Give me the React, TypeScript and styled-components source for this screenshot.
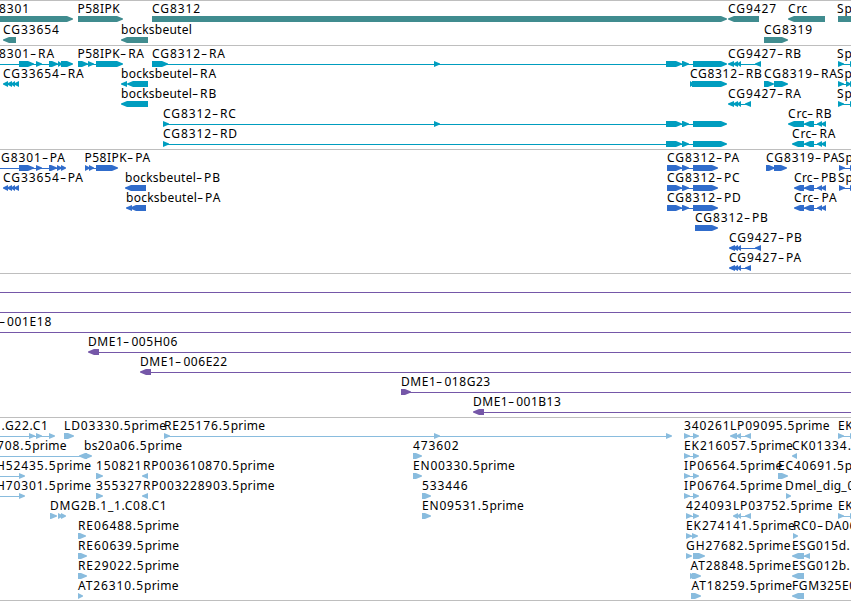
import styled, { createGlobalStyle } from "styled-components";

type Direction = 1 | -1;
type Exon = [number, number, Direction?];

interface Feature {
  label?: string;
  x?: number;
  dir?: Direction;
  exons?: Exon[];
  line?: [number, number];
  spacing?: number;
}

interface TrackData {
  name: string;
  color: string;
  rowHeight: number;
  rows: Feature[][];
}

const VIEW_WIDTH = 851;
const GLYPH_HEIGHT = 6;

const GlobalStyle = createGlobalStyle`
  body {
    margin: 0;
    background-color: #ffffff;
    overflow: hidden;
  }
`;

const Browser = styled.main`
  display: flex;
  flex-direction: column;
  width: ${VIEW_WIDTH}px;
  height: 601px;
  overflow: hidden;
  color: #000000;
  font-family: "Noto Sans", "DejaVu Sans", sans-serif;
  font-size: 12px;
`;

const Track = styled.section<{ $color: string }>`
  display: flex;
  flex-direction: column;
  flex-shrink: 0;
  padding-bottom: 3px;
  border-top: 1px solid #bebebe;
  color: ${(props) => props.$color};

  &:first-child,
  &:last-of-type {
    padding-bottom: 2px;
  }
`;

const Row = styled.div<{ $height: number }>`
  display: flex;
  flex-direction: column;
  position: relative;
  height: ${(props) => props.$height}px;
  padding-top: 15px;
  box-sizing: border-box;
`;

/* Labels are pinned to the map coordinate where their feature starts. */
const Label = styled.span<{ $x: number }>`
  position: absolute;
  top: -1px;
  left: ${(props) => props.$x}px;
  color: #000000;
  line-height: 17px;
  white-space: pre;
`;

const Run = styled.span<{ $spacing: number }>`
  letter-spacing: ${(props) => props.$spacing}px;
`;

const Dash = styled.span`
  display: inline-block;
  width: 8px;
  transform: scaleX(1.6);
  transform-origin: 0 50%;
`;

const Glyphs = styled.svg`
  display: block;
  flex-shrink: 0;
  fill: currentColor;
`;

const EndRule = styled.div`
  flex-shrink: 0;
  height: 1px;
  background-color: #bebebe;
`;

const rc: Exon[] = [
  [434, 440],
  [666, 682],
  [682, 689],
  [693, 727],
];
const pa: Exon[] = [
  [667, 682],
  [682, 689],
  [693, 718],
];
const cg33654: Exon[] = [
  [3, 8],
  [7, 12],
  [11, 15],
  [14, 19],
];
const crcTail: Exon[] = [
  [804, 814],
  [817, 822],
  [821, 826],
];
const ek: Exon[] = [
  [684, 690],
  [693, 699],
];

const tracks: TrackData[] = [
  {
    name: "genes",
    color: "#408c8f",
    rowHeight: 21,
    rows: [
      [
        { label: "8301", x: -1, exons: [[-10, 73]] },
        { label: "P58IPK", x: 77.5, spacing: 0.5, exons: [[78, 123]] },
        { label: "CG8312", x: 152, exons: [[152, 727]] },
        { label: "CG9427", x: 728, dir: -1, exons: [[728, 759]] },
        { label: "Crc", x: 788, dir: -1, exons: [[788, 825]] },
        { label: "Sp", x: 837, exons: [[838, 870]] },
      ],
      [
        { label: "CG33654", x: 3, dir: -1, exons: [[3, 16]] },
        { label: "bocksbeutel", x: 121, dir: -1, exons: [[121, 148]] },
        { label: "CG8319", x: 764, exons: [[764, 788]] },
      ],
    ],
  },
  {
    name: "transcripts",
    color: "#009dbf",
    rowHeight: 20,
    rows: [
      [
        {
          label: "8301-RA",
          x: -1,
          line: [0, 70],
          exons: [[19, 34], [36, 42], [49, 58], [58, 62], [61, 73]],
        },
        { label: "P58IPK-RA", x: 77.5, spacing: 0.5, line: [78, 120], exons: [[78, 88], [88, 94], [96, 123]] },
        { label: "CG8312-RA", x: 152, line: [152, 724], exons: [[152, 168], ...rc] },
        {
          label: "CG9427-RB",
          x: 728,
          dir: -1,
          line: [730, 760],
          exons: [[728, 734], [733, 738], [737, 741], [755, 761]],
        },
        { label: "Sp", x: 837, line: [838, 851], exons: [[838, 844], [850, 856]] },
      ],
      [
        { label: "CG33654-RA", x: 3, dir: -1, exons: cg33654 },
        { label: "bocksbeutel-RA", x: 121, dir: -1, exons: [[121, 127], [127, 148]] },
        { label: "CG8312-RB", x: 690, spacing: 0.7, exons: [[690, 694], [692, 727]] },
        { label: "CG8319-RA", x: 764, exons: [[764, 774], [774, 788]] },
        { label: "Sp", x: 837, line: [838, 851], exons: [[838, 844], [846, 851], [850, 856]] },
      ],
      [
        { label: "bocksbeutel-RB", x: 121, dir: -1, exons: [[121, 148]] },
        {
          label: "CG9427-RA",
          x: 728,
          dir: -1,
          line: [730, 750],
          exons: [[728, 734], [733, 738], [737, 741], [745, 751]],
        },
        { label: "Sp", x: 837, line: [838, 851], exons: [[838, 844], [850, 856]] },
      ],
      [
        { label: "CG8312-RC", x: 163, line: [163, 724], exons: [[163, 169], ...rc] },
        { label: "Crc-RB", x: 788, dir: -1, line: [790, 824], exons: [[788, 804], ...crcTail] },
      ],
      [
        { label: "CG8312-RD", x: 163, line: [163, 724], exons: [[163, 169], ...rc.slice(1)] },
        { label: "Crc-RA", x: 792, dir: -1, line: [794, 824], exons: [[792, 804], ...crcTail] },
      ],
    ],
  },
  {
    name: "proteins",
    color: "#306ccb",
    rowHeight: 20,
    rows: [
      [
        {
          label: "G8301-PA",
          x: 1,
          line: [0, 64],
          exons: [[19, 34], [36, 42], [49, 57], [57, 62], [61, 66]],
        },
        { label: "P58IPK-PA", x: 84.5, spacing: 0.5, line: [85, 115], exons: [[85, 90], [89, 94], [96, 118]] },
        { label: "CG8312-PA", x: 667, line: [667, 715], exons: pa },
        { label: "CG8319-PA", x: 766, exons: [[766, 775], [774, 787]] },
        { label: "Sp", x: 838, line: [839, 851], exons: [[839, 845], [850, 856]] },
      ],
      [
        { label: "CG33654-PA", x: 3, dir: -1, exons: cg33654 },
        { label: "bocksbeutel-PB", x: 125, dir: -1, exons: [[125, 146]] },
        { label: "CG8312-PC", x: 667, line: [667, 715], exons: pa },
        { label: "Crc-PB", x: 794, spacing: 0.3, dir: -1, line: [796, 824], exons: [[794, 804], ...crcTail] },
        { label: "Sp", x: 838, line: [839, 851], exons: [[839, 845], [850, 856]] },
      ],
      [
        { label: "bocksbeutel-PA", x: 126, dir: -1, exons: [[126, 132], [130, 146]] },
        { label: "CG8312-PD", x: 667, line: [667, 715], exons: pa },
        { label: "Crc-PA", x: 794, dir: -1, line: [796, 824], exons: [[794, 804], ...crcTail] },
      ],
      [{ label: "CG8312-PB", x: 695, exons: [[695, 718]] }],
      [
        {
          label: "CG9427-PB",
          x: 729,
          dir: -1,
          line: [731, 760],
          exons: [[729, 735], [733, 738], [737, 741], [755, 761]],
        },
      ],
      [
        {
          label: "CG9427-PA",
          x: 729,
          dir: -1,
          line: [731, 750],
          exons: [[729, 735], [733, 738], [737, 741], [745, 751]],
        },
      ],
    ],
  },
  {
    name: "clones",
    color: "#7557a8",
    rowHeight: 20,
    rows: [
      [{ line: [0, 851] }],
      [{ line: [0, 851] }],
      [{ label: "-001E18", x: -1, spacing: 0.65, line: [0, 851] }],
      [{ label: "DME1-005H06", x: 88, spacing: 0.55, dir: -1, line: [92, 851], exons: [[88, 99]] }],
      [{ label: "DME1-006E22", x: 140, spacing: 0.55, dir: -1, line: [144, 851], exons: [[140, 151]] }],
      [{ label: "DME1-018G23", x: 401, spacing: 0.55, line: [401, 851], exons: [[401, 411]] }],
      [{ label: "DME1-001B13", x: 473, spacing: 0.5, dir: -1, line: [477, 851], exons: [[473, 484]] }],
    ],
  },
  {
    name: "ests",
    color: "#89bcde",
    rowHeight: 20,
    rows: [
      [
        { label: "1.G22.C1", x: -6, spacing: 0.7, line: [0, 52], exons: [[29, 35], [36, 42], [49, 55]] },
        { label: "LD03330.5prime", x: 64, exons: [[64, 74]] },
        { label: "RE25176.5prime", x: 164, line: [164, 670], exons: [[164, 170], [434, 440], [666, 672]] },
        { label: "340261", x: 684, line: [684, 697], exons: ek },
        { label: "LP09095.5prime", x: 730, spacing: 0.8, dir: -1, line: [732, 750], exons: [[730, 737], [736, 741], [745, 751]] },
        { label: "EK", x: 838, spacing: 0.5, line: [838, 851], exons: [[838, 844], [850, 856]] },
      ],
      [
        { label: "708.5prime", x: -3, line: [0, 82], exons: [[79, 87, -1], [85, 92]] },
        { label: "bs20a06.5prime", x: 84 },
        { label: "473602", x: 413, exons: [[413, 422]] },
        { label: "EK216057.5prime", x: 684, line: [684, 697], exons: ek },
        { label: "CK01334.", x: 792, dir: -1, exons: [[792, 797]] },
      ],
      [
        { label: "H52435.5prime", x: -4, line: [0, 20], exons: [[19, 25]] },
        { label: "150821", x: 96, exons: [[96, 103]] },
        { label: "RP003610870.5prime", x: 143, spacing: 0.8, dir: -1, exons: [[142, 148]] },
        { label: "EN00330.5prime", x: 413, spacing: 0.8, exons: [[413, 422]] },
        { label: "IP06564.5prime", x: 684, line: [684, 697], exons: ek },
        { label: "EC40691.5p", x: 778, exons: [[778, 788]] },
      ],
      [
        { label: "H70301.5prime", x: -4, line: [0, 20], exons: [[19, 25]] },
        { label: "355327", x: 96, exons: [[96, 103]] },
        { label: "RP003228903.5prime", x: 143, spacing: 0.8, dir: -1, exons: [[142, 148]] },
        { label: "533446", x: 422, exons: [[422, 431]] },
        { label: "IP06764.5prime", x: 684, line: [684, 697], exons: ek },
        { label: "Dmel_dig_0", x: 785, exons: [[786, 791]] },
      ],
      [
        { label: "DMG2B.1_1.C08.C1", x: 50, spacing: 0.7, exons: [[50, 57], [58, 63], [61, 66]] },
        { label: "EN09531.5prime", x: 422, spacing: 0.8, exons: [[422, 431]] },
        { label: "424093", x: 686, line: [686, 697], exons: [[686, 692], [693, 699]] },
        { label: "LP03752.5prime", x: 733, spacing: 0.8, dir: -1, line: [735, 750], exons: [[733, 738], [737, 741], [745, 751]] },
        { label: "EK", x: 838, spacing: 0.5, line: [838, 851], exons: [[838, 844], [850, 856]] },
      ],
      [
        { label: "RE06488.5prime", x: 78, exons: [[78, 86]] },
        { label: "EK274141.5prime", x: 686, line: [686, 697], exons: [[686, 692], [692, 698]] },
        { label: "RC0-DA06", x: 793, spacing: 0.6, exons: [[793, 798]] },
      ],
      [
        { label: "RE60639.5prime", x: 78, exons: [[78, 87]] },
        { label: "GH27682.5prime", x: 686, exons: [[686, 692], [693, 705]] },
        { label: "ESG015d.", x: 792, spacing: 0.7, dir: -1, line: [796, 809], exons: [[792, 804], [804, 810]] },
      ],
      [
        { label: "RE29022.5prime", x: 78, exons: [[78, 87]] },
        { label: "AT28848.5prime", x: 690.5, exons: [[690, 696], [692, 701]] },
        { label: "ESG012b.", x: 792, spacing: 0.7, dir: -1, exons: [[792, 804]] },
      ],
      [
        { label: "AT26310.5prime", x: 78, exons: [[78, 83]] },
        { label: "AT18259.5prime", x: 691.5, exons: [[691, 701]] },
        { label: "FGM325E0", x: 792, spacing: 0.6, dir: -1, exons: [[792, 804]] },
      ],
    ],
  },
];

function exonPoints(start: number, end: number, dir: Direction) {
  const head = Math.min(6, end - start);
  const tip = dir === 1 ? end : start;
  const tail = dir === 1 ? start : end;
  const neck = tip - dir * head;
  return `${tail},0 ${neck},0 ${tip},2.5 ${tip},3.5 ${neck},${GLYPH_HEIGHT} ${tail},${GLYPH_HEIGHT}`;
}

// Capitals and digits are set wider apart than lowercase letters.
function LabelText({ text, spacing }: { text: string; spacing: number }) {
  const runs = text.match(/-|[a-z]+|[^a-z-]+/g) ?? [];
  return (
    <>
      {runs.map((run, i) =>
        run === "-" ? (
          <Dash key={i}>-</Dash>
        ) : (
          <Run key={i} $spacing={/[a-z]/.test(run) ? 0.25 : spacing}>
            {run}
          </Run>
        )
      )}
    </>
  );
}

function FeatureRow({ features, height }: { features: Feature[]; height: number }) {
  return (
    <Row $height={height}>
      {features.map(
        ({ label, x = 0, spacing = 0.9 }, i) =>
          label && (
            <Label key={i} $x={x}>
              <LabelText text={label} spacing={spacing} />
            </Label>
          )
      )}
      <Glyphs width={VIEW_WIDTH} height={GLYPH_HEIGHT}>
        {features.map(({ line, exons = [], dir = 1 }, i) => (
          <g key={i}>
            {line && <rect x={line[0]} y={3} width={line[1] - line[0]} height={1} />}
            {exons.map(([start, end, own], j) => (
              <polygon key={j} points={exonPoints(start, end, own ?? dir)} />
            ))}
          </g>
        ))}
      </Glyphs>
    </Row>
  );
}

export default function App() {
  return (
    <Browser>
      <GlobalStyle />
      {tracks.map((track) => (
        <Track key={track.name} $color={track.color}>
          {track.rows.map((features, i) => (
            <FeatureRow key={i} features={features} height={track.rowHeight} />
          ))}
        </Track>
      ))}
      <EndRule />
    </Browser>
  );
}
